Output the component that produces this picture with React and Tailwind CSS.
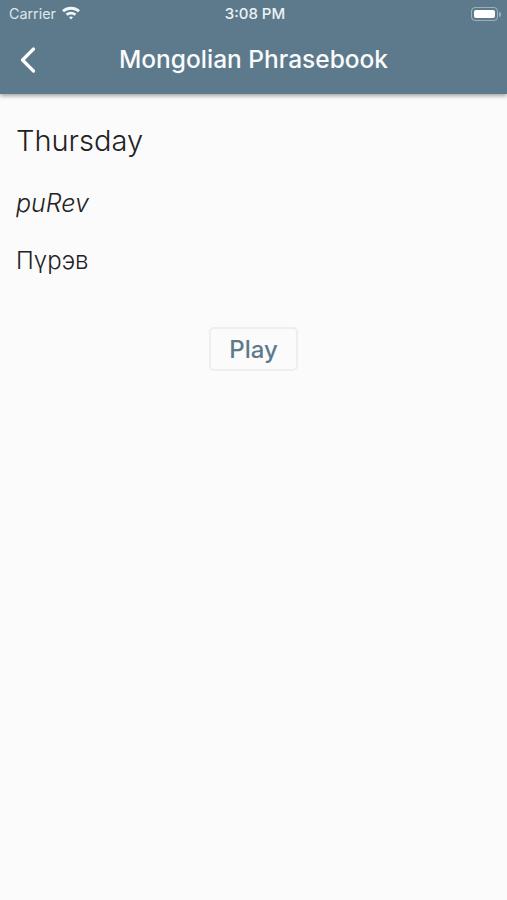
const font = { fontFamily: "Inter, 'Noto Sans', sans-serif" };

function Wifi() {
  return (
    <svg width="20" height="15" viewBox="0 0 20 15" className="ml-[5px] mt-[-3px]">
      <path d="M1 5.2C5.8 0.6 14.2 0.6 19 5.2L17 7.3C13.2 3.8 6.8 3.8 3 7.3Z" fill="#f4f7f8" />
      <path d="M4.6 8.8C7.6 6.1 12.4 6.1 15.4 8.8L13.5 10.7C11.4 9 8.6 9 6.5 10.7Z" fill="#f4f7f8" />
      <path d="M8 12.2C9.2 11.3 10.8 11.3 12 12.2L10 14.4Z" fill="#f4f7f8" />
    </svg>
  );
}

function Battery() {
  return (
    <div className="flex items-center">
      <div className="flex h-[14px] w-[27px] items-center rounded-[4px] border border-white/40 p-[2px]">
        <div className="h-full w-full rounded-[2px] bg-white" />
      </div>
      <div className="ml-[1px] h-[5px] w-[2px] rounded-r-sm bg-white/40" />
    </div>
  );
}

export default function App() {
  return (
    <div style={font} className="flex h-[900px] w-[507px] flex-col overflow-hidden bg-[#fbfbfb]">
      <header className="relative z-10 h-[94px] bg-[#5d7a8c] shadow-[0_2px_4px_rgba(0,0,0,0.35)]">
        <div className="grid h-[28px] grid-cols-3 items-center pl-[9px] pr-[6px] text-[14px] text-[#eef2f4]">
          <div className="flex items-center">
            <span className="text-[14.3px] text-[#dfe6ea]">Carrier</span>
            <Wifi />
          </div>
          <div className="text-center text-[15px] font-medium">3:08 PM</div>
          <div className="flex justify-end">
            <Battery />
          </div>
        </div>
        <div className="relative flex h-[64px] items-center justify-center">
          <svg width="20" height="28" viewBox="0 0 20 28" className="absolute left-[18px] top-[18px]">
            <path d="M15.5 3L4.5 14L15.5 25" fill="none" stroke="#ffffff" strokeWidth="3.2" strokeLinecap="round" strokeLinejoin="round" />
          </svg>
          <h1 className="mt-[-1px] text-[24.5px] font-medium leading-none text-[#fafbfc]">Mongolian Phrasebook</h1>
        </div>
      </header>

      <main className="flex flex-col px-4 text-[#222222]">
        <p className="mt-[30px] text-[29px] font-light leading-[34px]">Thursday</p>
        <p className="mt-[32px] text-[25px] font-light italic leading-[26px]">puRev</p>
        <p className="mt-[32px] text-[24px] font-light leading-[26px]">Пүрэв</p>
        <div className="mt-[53px] flex justify-center">
          <button className="h-[44px] w-[89px] rounded-[5px] border-2 border-[#eceef0] pt-[1px] text-[24px] font-medium text-[#5d7a8c]">
            Play
          </button>
        </div>
      </main>
    </div>
  );
}
